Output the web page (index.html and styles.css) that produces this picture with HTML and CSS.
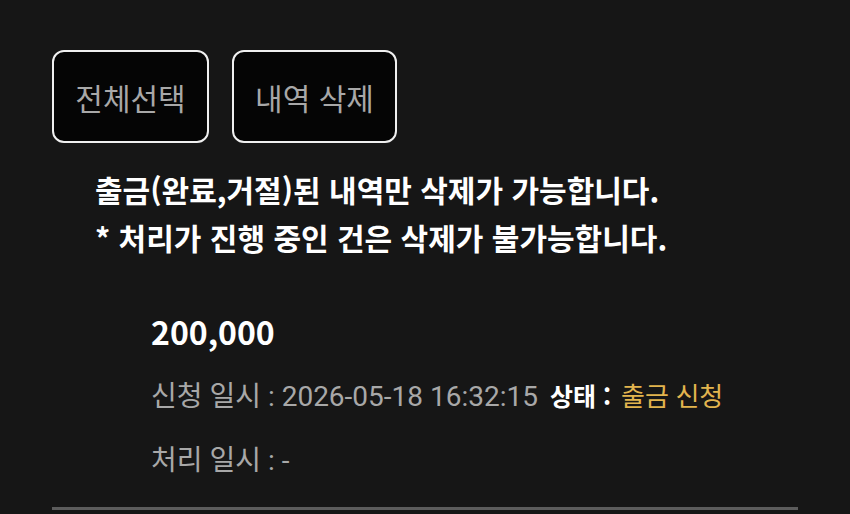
FILE: index.html
```html
<!DOCTYPE html>
<html lang="ko">
<head>
  <meta charset="UTF-8">
  <meta name="viewport" content="width=device-width, initial-scale=1.0">
  <title>출금 내역</title>
  <link rel="stylesheet" href="styles.css">
</head>
<body>
  <main class="history">
    <div class="toolbar">
      <button class="tool-btn" id="selectAllBtn">전체선택</button>
      <button class="tool-btn" id="deleteBtn">내역 삭제</button>
    </div>

    <div class="notice">
      <p>출금(완료,거절)된 내역만 삭제가 가능합니다.</p>
      <p>* 처리가 진행 중인 건은 삭제가 불가능합니다.</p>
    </div>

    <div class="item">
      <div class="amount">200,000</div>
      <div class="row">
        <span class="label">신청 일시 : 2026-05-18 16:32:15</span>
        <span class="state-label">상태 :</span>
        <span class="state">출금 신청</span>
      </div>
      <div class="row">
        <span class="label">처리 일시 : -</span>
      </div>
    </div>

    <div class="divider"></div>
  </main>
</body>
</html>
```

FILE: styles.css
```css
body {
  margin: 0;
  padding: 0;
  background-color: #161616;
  font-family: "Roboto", "Noto Sans CJK KR", sans-serif;
  color: #fff;
}

.history {
  padding: 50px 52px 0;
}

.toolbar {
  display: flex;
  gap: 23px;
}

.tool-btn {
  width: 157px;
  height: 93px;
  background-color: #050505;
  border: 2px solid #f0f0f0;
  border-radius: 12px;
  color: #a8a8a8;
  font-family: "Noto Sans CJK KR", sans-serif;
  font-size: 30px;
  padding: 0;
  cursor: pointer;
}

.tool-btn + .tool-btn {
  width: 165px;
}

.notice {
  margin: 22px 0 0 43px;
}

.notice p {
  margin: 0;
  font-family: "Noto Sans CJK KR", sans-serif;
  font-size: 30px;
  font-weight: bold;
  line-height: 48px;
  color: #fff;
}

.item {
  padding-left: 99px;
  margin-top: 50px;
}

.amount {
  font-family: "Noto Sans CJK KR", sans-serif;
  font-size: 32px;
  font-weight: bold;
  line-height: 40px;
}

.row {
  margin-top: 24px;
  line-height: 40px;
  font-size: 28px;
  display: flex;
  align-items: baseline;
  gap: 12px;
}

.label {
  color: #a8a8a8;
}

.state-label {
  font-family: "Noto Sans CJK KR", sans-serif;
  font-size: 25px;
  font-weight: bold;
  color: #fff;
}

.state {
  margin-left: -2px;
  font-size: 26px;
  color: #e2b44e;
}

.divider {
  margin-top: 26px;
  height: 3px;
  background-color: #5c5c5c;
}
```
